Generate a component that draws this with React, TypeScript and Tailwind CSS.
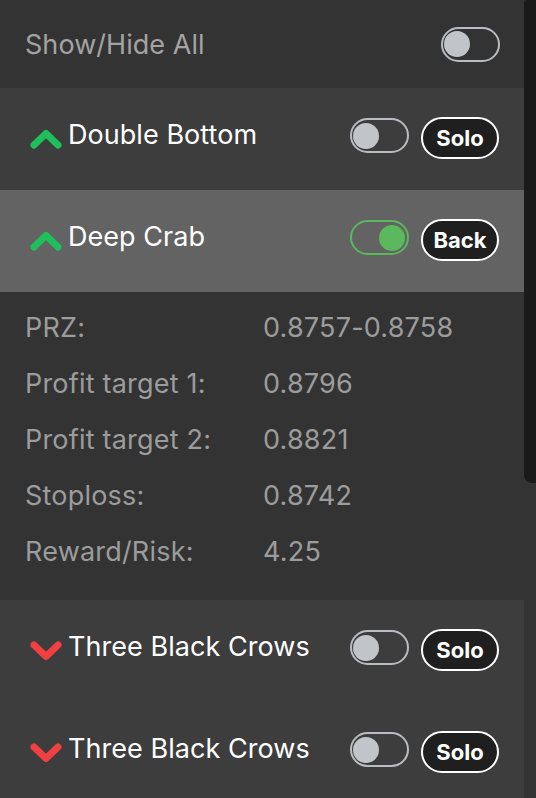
import React from 'react';

type Pattern = {
  name: string;
  dir: 'up' | 'down';
  on: boolean;
  active?: boolean;
};

const patterns: Pattern[] = [
  { name: 'Double Bottom', dir: 'up', on: false },
  { name: 'Deep Crab', dir: 'up', on: true, active: true },
  { name: 'Three Black Crows', dir: 'down', on: false },
  { name: 'Three Black Crows', dir: 'down', on: false },
];

const details = [
  ['PRZ:', '0.8757-0.8758'],
  ['Profit target 1:', '0.8796'],
  ['Profit target 2:', '0.8821'],
  ['Stoploss:', '0.8742'],
  ['Reward/Risk:', '4.25'],
];

function Toggle({ on }: { on: boolean }) {
  return (
    <div
      className={
        on
          ? 'w-[59px] h-[35px] shrink-0 rounded-full border-2 border-[#5cb85c] flex items-center justify-end px-[2px]'
          : 'w-[59px] h-[35px] shrink-0 rounded-full border-2 border-[#b9bdc1] flex items-center justify-start px-[1px]'
      }
    >
      <div className={on ? 'w-[26px] h-[26px] rounded-full bg-[#5cb85c]' : 'w-[26px] h-[26px] rounded-full bg-[#c1c5c9]'} />
    </div>
  );
}

function Chevron({ dir }: { dir: 'up' | 'down' }) {
  const up = dir === 'up';
  return (
    <svg width="32" height="20" viewBox="0 0 32 20" className="shrink-0">
      <polyline
        points={up ? '4,16 16,4.5 28,16' : '4,4 16,15.5 28,4'}
        fill="none"
        stroke={up ? '#1fbf5b' : '#f23f42'}
        strokeWidth={7}
        strokeLinecap="round"
        strokeLinejoin="round"
      />
    </svg>
  );
}

function PatternRow({ p }: { p: Pattern }) {
  return (
    <div className={`h-[102px] shrink-0 flex items-center pl-[30px] pr-[25px] ${p.active ? 'bg-[#636363]' : 'bg-[#3d3d3d]'}`}>
      <Chevron dir={p.dir} />
      <span className="ml-[6px] -mt-[8px] text-white text-[27px] tracking-[0.05px] flex-1">{p.name}</span>
      <div className="flex items-start gap-[12px] -mt-[2px]">
        <div className="mt-[1px]">
          <Toggle on={p.on} />
        </div>
        <button className="w-[78px] h-[42px] rounded-full border-2 border-white bg-[#1f1f1f] text-white font-bold text-[22px] flex items-center justify-center">
          {p.active ? 'Back' : 'Solo'}
        </button>
      </div>
    </div>
  );
}

export default function App() {
  return (
    <div className="w-[536px] h-[798px] overflow-hidden flex bg-[#333333]" style={{ fontFamily: 'Inter, "Noto Sans", sans-serif' }}>
      <div className="w-[524px] flex flex-col shrink-0">
        <div className="h-[88px] shrink-0 flex items-center justify-between pl-[25px] pr-[24px] bg-[#333333]">
          <span className="text-[27px] tracking-[0.05px] text-[#a3a3a3] mt-[2px]">Show/Hide All</span>
          <Toggle on={false} />
        </div>
        <PatternRow p={patterns[0]} />
        <PatternRow p={patterns[1]} />
        <div className="h-[308px] shrink-0 bg-[#333333] pt-[8px] pl-[25px]">
          {details.map(([label, value]) => (
            <div key={label} className="h-[56px] flex items-center text-[27px] tracking-[0.2px] text-[#9c9c9c]">
              <span className="w-[238px]">{label}</span>
              <span>{value}</span>
            </div>
          ))}
        </div>
        <PatternRow p={patterns[2]} />
        <PatternRow p={patterns[3]} />
      </div>
      <div className="w-[12px] shrink-0">
        <div className="h-[483px] bg-[#1a1a1a] rounded-tl-[3px] rounded-bl-[8px]" />
      </div>
    </div>
  );
}
